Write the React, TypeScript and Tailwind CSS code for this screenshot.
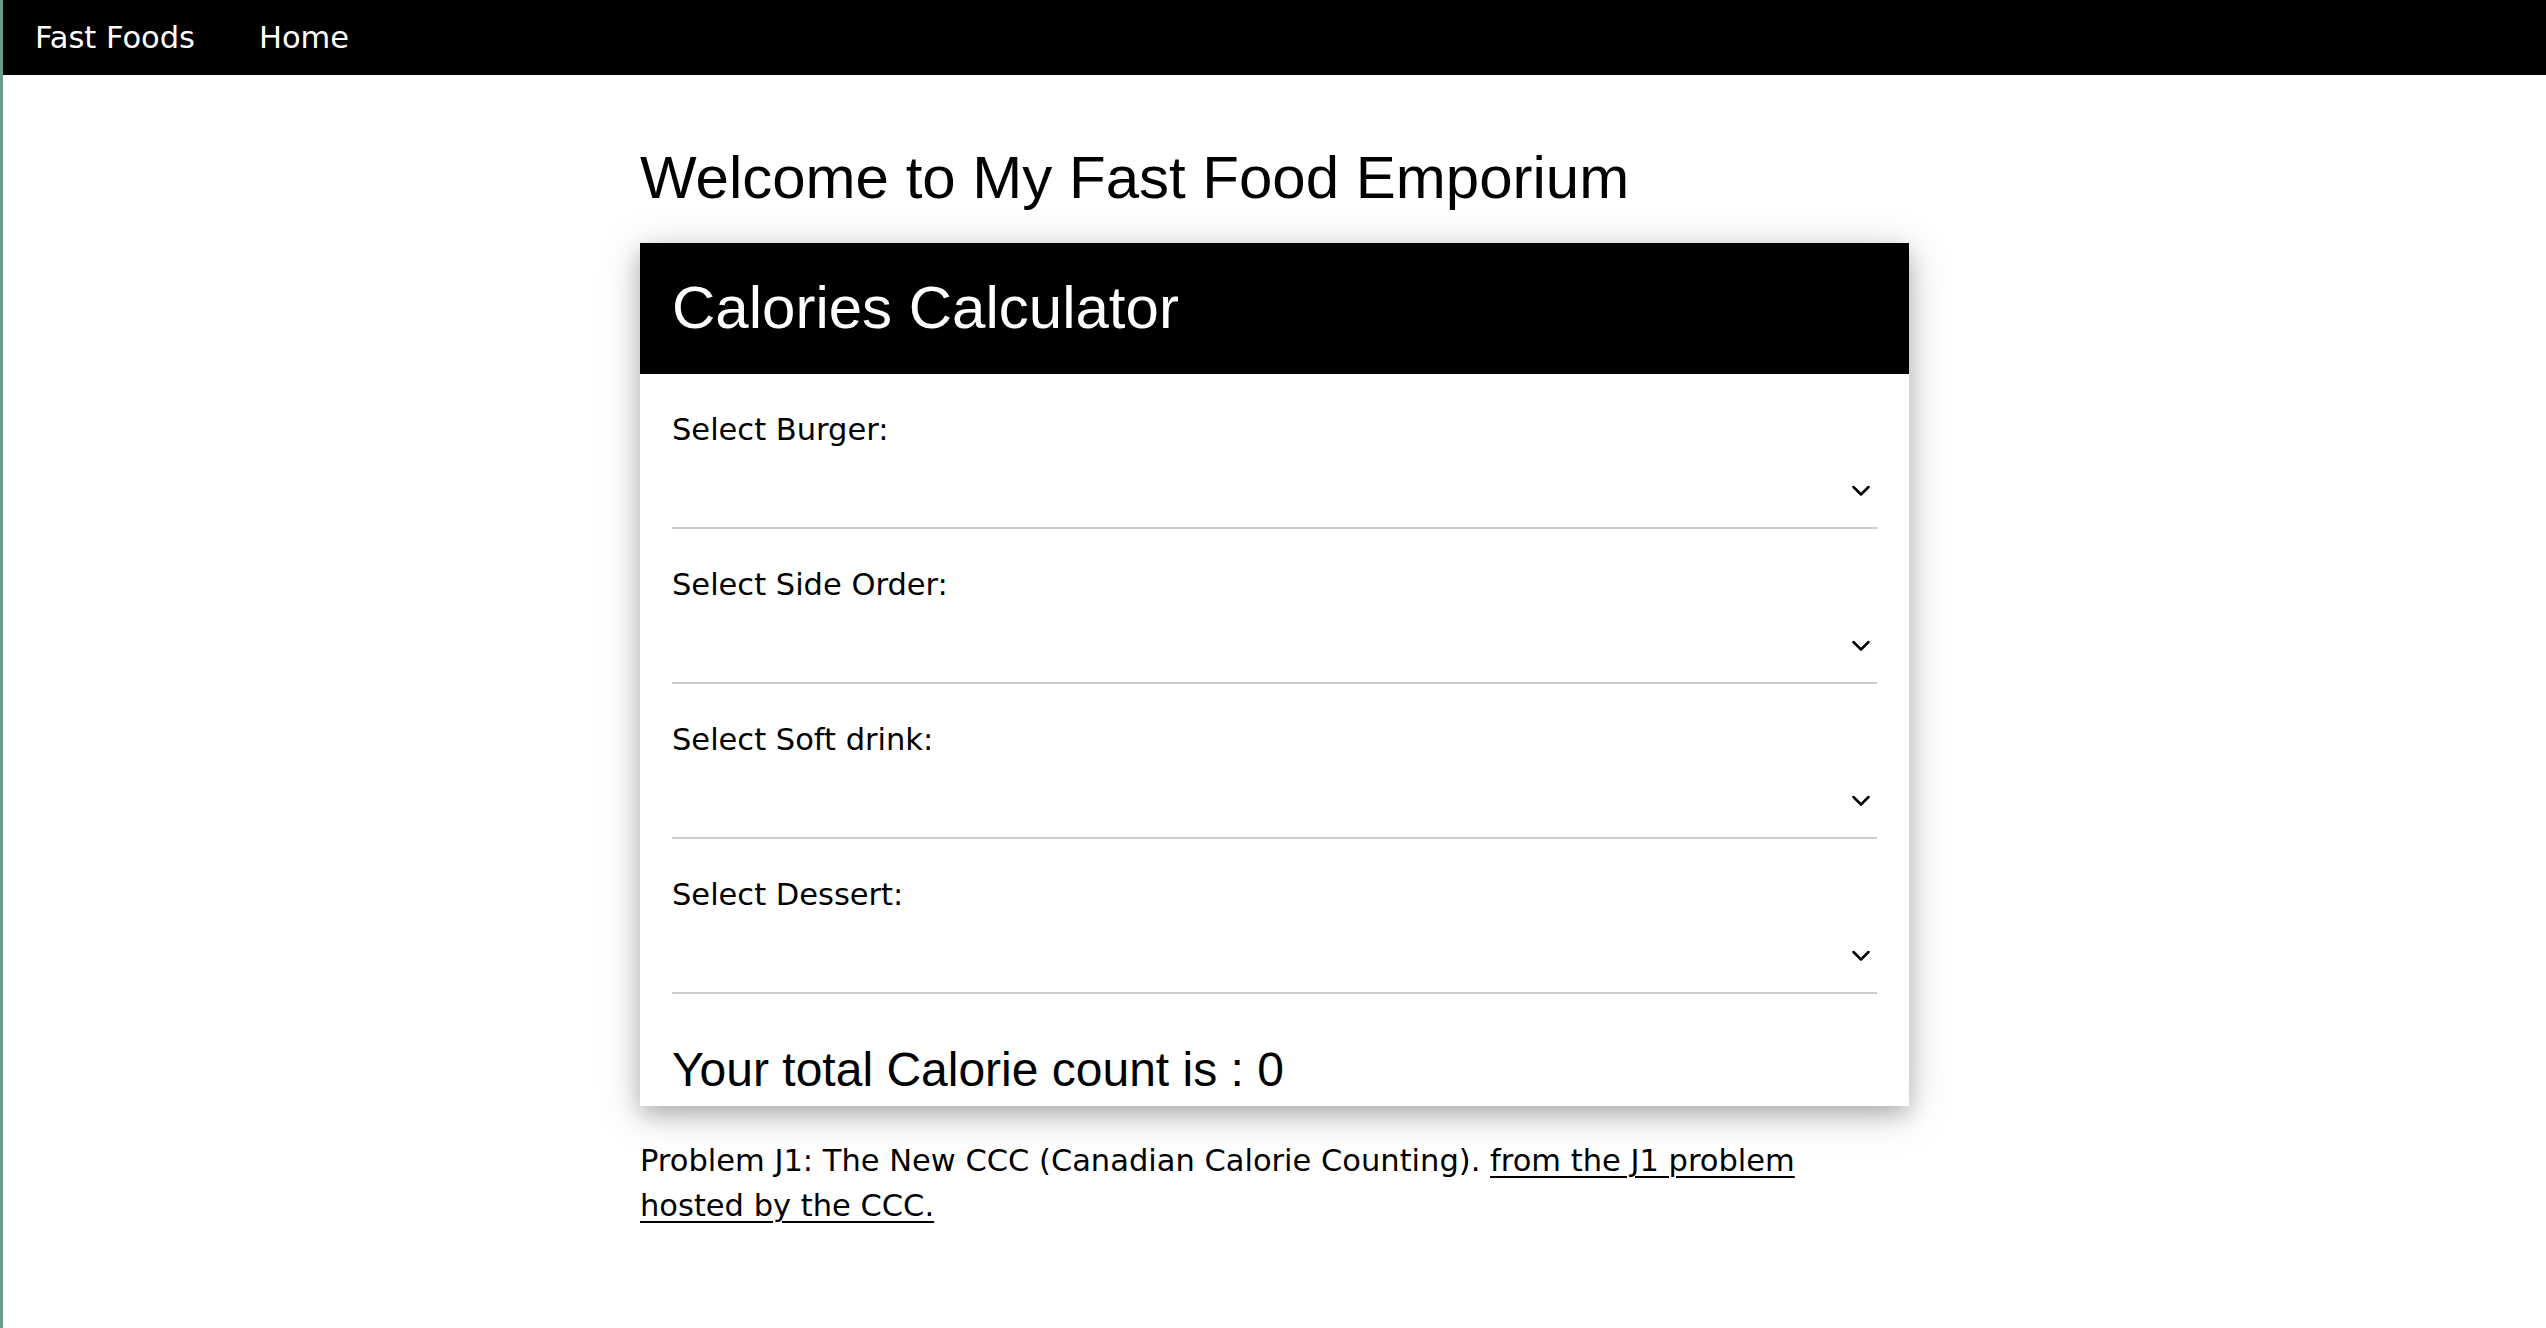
import { ChangeEvent, useState } from 'react';

// Calories per choice, index 0 is "nothing selected"
const MENU = [
  { label: 'Select Burger:', options: [0, 461, 431, 420] },
  { label: 'Select Side Order:', options: [0, 100, 57, 70] },
  { label: 'Select Soft drink:', options: [0, 130, 160, 118] },
  { label: 'Select Dessert:', options: [0, 167, 266, 75] },
];

const Chevron = () => (
  <svg width="18" height="11" viewBox="0 0 18 11" fill="none" className="pointer-events-none absolute right-[7px] top-1/2 -translate-y-1/2">
    <polyline points="1.5,1.5 9,9 16.5,1.5" stroke="#000" strokeWidth="2.5" strokeLinecap="round" strokeLinejoin="round" />
  </svg>
);

const App = () => {
  const [choices, setChoices] = useState<number[]>([0, 0, 0, 0]);

  const total = choices.reduce((sum, c, i) => sum + MENU[i].options[c], 0);

  const handleChange = (i: number) => (e: ChangeEvent<HTMLSelectElement>) => {
    const next = [...choices];
    next[i] = Number(e.target.value);
    setChoices(next);
  };

  return (
    <div className="flex min-h-screen bg-white text-black">
      <div className="w-[3px] shrink-0 bg-[#6b9a86]" />
      <div className="min-w-0 flex-1 font-['DejaVu_Sans',Verdana,sans-serif] text-[30.5px] leading-[45px]">
        <nav className="flex bg-black text-white">
          <a href="#" className="px-[32px] py-[15px]">Fast Foods</a>
          <a href="#" className="px-[32px] py-[15px]">Home</a>
        </nav>

        <main className="mx-auto w-[1269px] pt-[58px] pb-[80px]">
          <h2 className="mb-[20px] font-['Liberation_Sans',Arial,sans-serif] text-[60px] leading-[90px]">
            Welcome to My Fast Food Emporium
          </h2>

          <div className="bg-white shadow-[0_8px_20px_0_rgba(0,0,0,0.2),0_8px_40px_0_rgba(0,0,0,0.19)]">
            <div className="bg-black px-[32px] pt-[20px] pb-[21px] text-white">
              <h2 className="font-['Liberation_Sans',Arial,sans-serif] text-[60px] leading-[90px]">Calories Calculator</h2>
            </div>

            <div className="px-[32px]">
              {MENU.map((item, i) => (
                <div key={item.label} className="pt-[33px]">
                  <label className="block">{item.label}</label>
                  <div className="relative">
                    <select
                      value={choices[i]}
                      onChange={handleChange(i)}
                      className="block h-[77px] w-full appearance-none border-b-2 border-[#cccccc] bg-transparent text-transparent outline-none"
                    >
                      {item.options.map((cal, idx) => (
                        <option key={idx} value={idx} label={idx === 0 ? ' ' : `${cal} cal`} />
                      ))}
                    </select>
                    <Chevron />
                  </div>
                </div>
              ))}

              <h3 className="mt-[40px] font-['Liberation_Sans',Arial,sans-serif] text-[48px] leading-[72px]">
                Your total Calorie count is : {total}
              </h3>
            </div>
          </div>

          <p className="mt-[32px] max-w-[1200px]">
            Problem J1: The New CCC (Canadian Calorie Counting).{' '}
            <a href="#" className="underline decoration-2 underline-offset-[5px]">
              from the J1 problem hosted by the CCC.
            </a>
          </p>
        </main>
      </div>
    </div>
  );
};

export default App;
